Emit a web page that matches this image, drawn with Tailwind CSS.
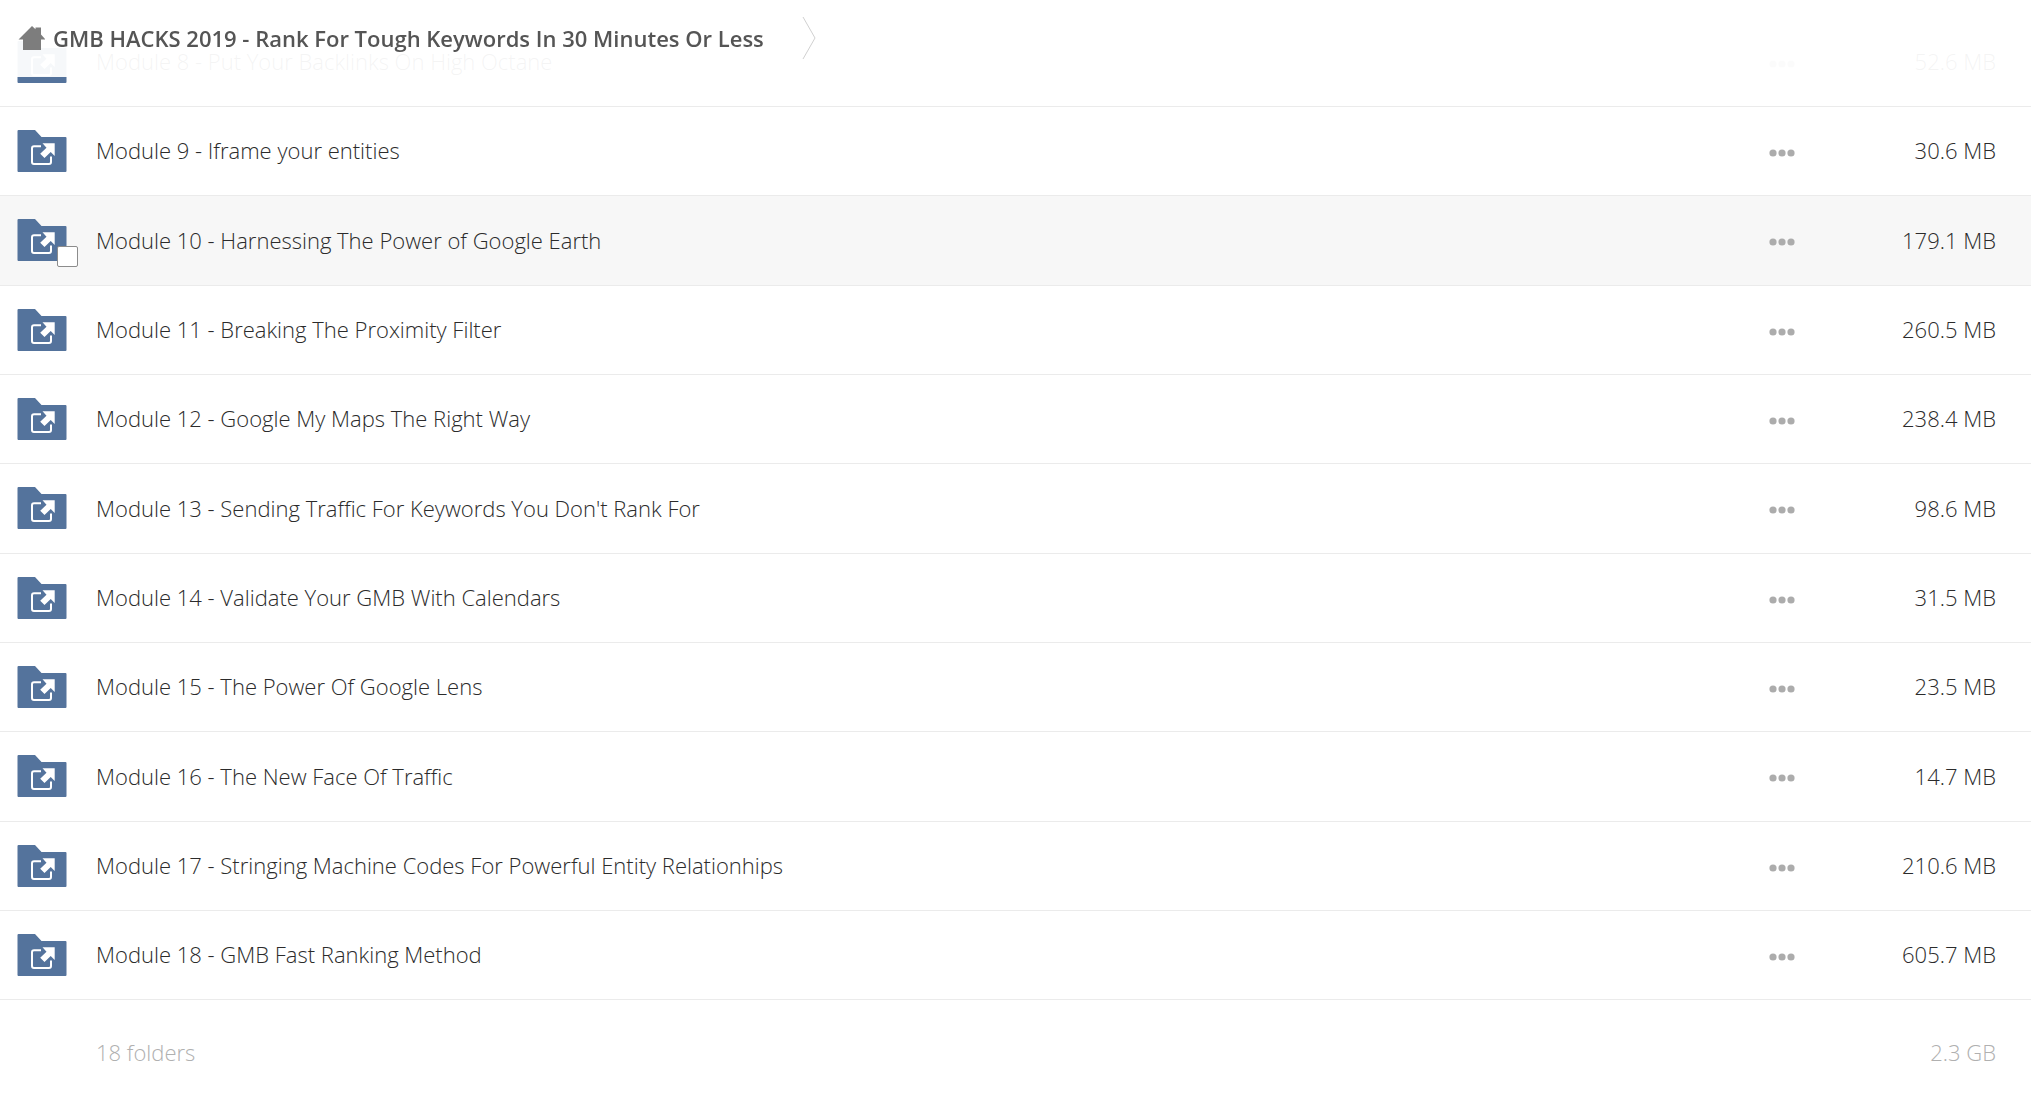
<!DOCTYPE html>
<html lang="en">
<head>
    <meta charset="UTF-8">
    <meta name="viewport" content="width=device-width, initial-scale=1.0">
    <title>GMB HACKS 2019</title>
    <script src="https://cdn.jsdelivr.net/npm/@tailwindcss/browser@4"></script>
</head>
<body class="bg-white font-['Open_Sans',sans-serif] text-[22px] leading-[30px] font-light text-[#2b2b2b]">
    <!-- Icons -->
    <svg class="hidden">
        <symbol id="folder" viewBox="0 0 50 42">
            <path fill="#54739c" d="M1.500 0H18l6.500 7H48.500a1 1 0 0 1 1 1v33a1 1 0 0 1-1 1H1.500a1 1 0 0 1-1-1V1a1 1 0 0 1 1-1z"/>
            <path fill="none" stroke="#fff" stroke-width="2" d="M24 16.200H17a2 2 0 0 0-2 2V32a2 2 0 0 0 2 2H32a2 2 0 0 0 2-2V26.500"/>
            <path fill="#fff" d="M25.500 13.300H37.700V26L33.700 22l-6.200 6-4.300-4.200 6.300-6z"/>
        </symbol>
        <symbol id="dots" viewBox="0 0 26 8">
            <g fill="#acacac">
                <circle cx="4" cy="4" r="3.600"/>
                <circle cx="13" cy="4" r="3.600"/>
                <circle cx="22" cy="4" r="3.600"/>
            </g>
        </symbol>
    </svg>

    <!-- Breadcrumb -->
    <header class="fixed inset-x-0 top-0 z-10 h-[77px] bg-white/95">
        <nav class="flex h-[76px] items-center pl-[18px]">
            <a href="#" class="flex items-center gap-2 font-semibold text-[#555]">
                <svg class="h-6 w-[27px]" viewBox="0 0 27 24" fill="#7d7d7d">
                    <path d="M14 0l3.500 3.300V1.500H23V8.500L27.500 13.500H23V24H5V13.500H.500z"/>
                </svg>
                <span>GMB HACKS 2019 - Rank For Tough Keywords In 30 Minutes Or Less</span>
            </a>
            <svg class="ml-[38px] h-[44px] w-[14px]" viewBox="0 0 14 44" fill="none" stroke="#d0d0d0">
                <path d="M1 1l12 21L1 43"/>
            </svg>
        </nav>
    </header>

    <!-- Folder list -->
    <main class="pt-[18px]">
        <table class="w-full table-fixed border-separate border-spacing-0">
            <colgroup>
                <col class="w-[96px]">
                <col>
                <col class="w-[100px]">
                <col class="w-[162px]">
            </colgroup>
            <tbody id="list"></tbody>
            <tfoot class="text-[#b0b0b0]">
                <tr class="h-[102px]">
                    <td></td>
                    <td class="pt-[2px]">18 folders</td>
                    <td></td>
                    <td class="pt-[2px] pr-[35px] text-right">2.3 GB</td>
                </tr>
            </tfoot>
        </table>
    </main>

    <script>
        const folders = [
            ["Module 8 - Put Your Backlinks On High Octane", "52.6 MB"],
            ["Module 9 - Iframe your entities", "30.6 MB"],
            ["Module 10 - Harnessing The Power of Google Earth", "179.1 MB", true],
            ["Module 11 - Breaking The Proximity Filter", "260.5 MB"],
            ["Module 12 - Google My Maps The Right Way", "238.4 MB"],
            ["Module 13 - Sending Traffic For Keywords You Don't Rank For", "98.6 MB"],
            ["Module 14 - Validate Your GMB With Calendars", "31.5 MB"],
            ["Module 15 - The Power Of Google Lens", "23.5 MB"],
            ["Module 16 - The New Face Of Traffic", "14.7 MB"],
            ["Module 17 - Stringing Machine Codes For Powerful Entity Relationhips", "210.6 MB"],
            ["Module 18 - GMB Fast Ranking Method", "605.7 MB"],
        ];

        document.getElementById("list").innerHTML = folders.map(([name, size, active]) => `
            <tr class="h-[89px] nth-[3n]:h-[90px] ${active ? "bg-[#f7f7f7]" : ""}">
                <td class="border-b border-[#ebebeb] pt-[23px] pl-[17px] align-top">
                    <div class="relative w-[50px]">
                        <svg class="h-[42px] w-[50px]"><use href="#folder"/></svg>
                        ${active ? `<input type="checkbox" aria-label="Select ${name}" class="absolute top-[27px] left-[40px] size-[21px] appearance-none rounded-xs border border-[#8c8c8c] bg-white">` : ""}
                    </div>
                </td>
                <td class="border-b border-[#ebebeb] pb-[2px]"><a href="#">${name}</a></td>
                <td class="border-b border-[#ebebeb]">
                    <button type="button" aria-label="More actions" class="block pt-[3px]">
                        <svg class="h-2 w-[26px]"><use href="#dots"/></svg>
                    </button>
                </td>
                <td class="border-b border-[#ebebeb] pr-[35px] pb-[2px] text-right">${size}</td>
            </tr>`).join("");
    </script>
</body>
</html>
